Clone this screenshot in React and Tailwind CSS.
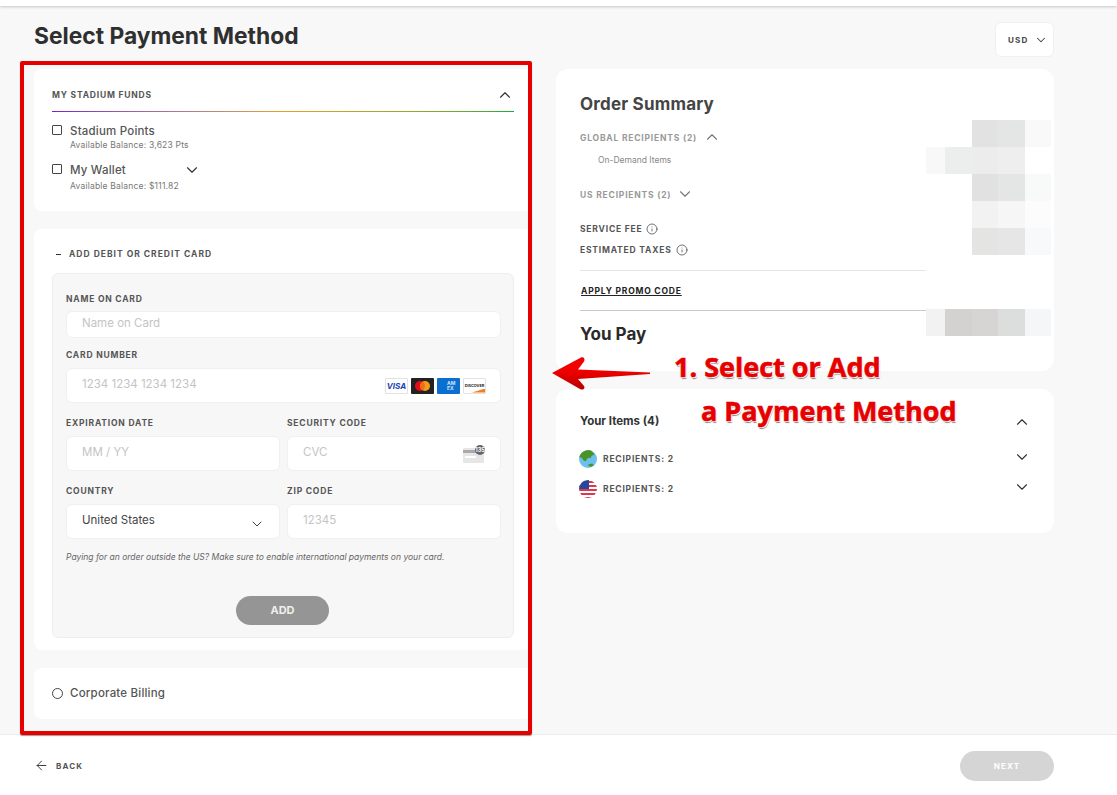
import React from 'react';
import { ChevronDown, ChevronUp, ArrowLeft, Info } from 'lucide-react';

const blurCells = [
  '', '', 'bg-[#e2e2e2]', 'bg-[#e4e5e5]', 'bg-[#f8f9f8]',
  'bg-[#f8f8f8]', 'bg-[#eceeee]', 'bg-[#ececec]', 'bg-[#eeeeee]', '',
  '', '', 'bg-[#e1e1e1]', 'bg-[#e4e6e6]', 'bg-[#f8faf9]',
  '', '', 'bg-[#f2f2f2]', 'bg-[#f6f6f6]', 'bg-[#fcfcfc]',
  '', '', 'bg-[#e4e4e3]', 'bg-[#e7e6e6]', 'bg-[#f8f9fb]',
  '', '', '', '', '',
  '', '', '', '', '',
  'bg-[#f2f2f2]', 'bg-[#d3d2d1]', 'bg-[#d6d5d4]', 'bg-[#dcdddd]', 'bg-[#f5f6f8]',
];

const Label = ({ children, className = '' }) => (
  <div className={`text-[8.5px] leading-[12px] font-bold tracking-[0.8px] uppercase text-[#555] ${className}`}>
    {children}
  </div>
);

const Field = ({ placeholder, h = 'h-[35px]', children, dark }) => (
  <div className={`${h} bg-white rounded-md border border-[#f0f0f0] flex items-center justify-between pl-[15px] pr-[14px]`}>
    <span className={`-mt-px text-[11.5px] ${dark ? 'text-[#444]' : 'text-[#c4c4c4]'}`}>{placeholder}</span>
    {children}
  </div>
);

const CardLogos = () => (
  <div className="flex gap-[3px] items-center">
    <div className="w-[23px] h-[16px] bg-white border border-[#e2e2e2] rounded-[1px] flex items-center justify-center text-[8px] leading-none font-bold italic text-[#1a3fb5]">VISA</div>
    <div className="w-[23px] h-[16px] bg-[#222] rounded-[1px]">
      <svg viewBox="0 0 23 16" className="w-full h-full">
        <circle cx="9" cy="8" r="5" fill="#e30d17" />
        <circle cx="14" cy="8" r="5" fill="#f59b1c" />
        <path d="M11.5 3.7a5 5 0 0 1 0 8.6a5 5 0 0 1 0-8.6z" fill="#f26a1b" />
      </svg>
    </div>
    <div className="w-[23px] h-[16px] bg-[#0a6fce] rounded-[1px] pl-[10px] text-[5px] leading-[5px] font-bold text-[#cfe4f8] pt-[3px]">AM<br />EX</div>
    <div className="w-[23px] h-[16px] bg-white border border-[#e2e2e2] rounded-[1px] relative overflow-hidden text-[3.8px] leading-[13px] font-bold text-center text-[#222]">
      DISCOVER
      <div className="absolute right-0 bottom-0 w-[13px] h-[4px] bg-[#f08020] [clip-path:polygon(100%_0,100%_100%,0_100%)]" />
    </div>
  </div>
);

const CvcIcon = () => (
  <svg width="23" height="18" viewBox="0 0 23 18">
    <rect x="0" y="3" width="21" height="15" rx="1" fill="#e6e6e6" />
    <rect x="0" y="5" width="21" height="3" fill="#a9a9a9" />
    <rect x="2" y="11" width="11" height="2" fill="#fff" />
    <circle cx="17" cy="5" r="5" fill="#666" />
    <text x="17" y="7" fontSize="5.5" textAnchor="middle" fill="#fff" fontWeight="700">135</text>
  </svg>
);

const GlobeIcon = () => (
  <svg width="18" height="18" viewBox="0 0 18 18">
    <circle cx="9" cy="9" r="9" fill="#6cc0ee" />
    <path d="M5 1.2C7 .2 10 -.2 12 .6L14 2.5L15.5 4.5L12.5 6L11.5 8.5L10 7.5L8 9L6.5 11.5L4 10L3 8L.3 7C1 4.5 3 2.2 5 1.2z" fill="#4a9427" />
    <path d="M9 14.5L13 13.5L15 15L12 16.8L9.5 16z" fill="#4a9427" />
  </svg>
);

const FlagIcon = () => (
  <svg width="18" height="18" viewBox="0 0 18 18">
    <defs>
      <clipPath id="flagClip"><circle cx="9" cy="9" r="9" /></clipPath>
    </defs>
    <g clipPath="url(#flagClip)">
      <rect width="18" height="18" fill="#fff" />
      <rect y="1" width="18" height="2" fill="#e0364a" />
      <rect y="5" width="18" height="2" fill="#e0364a" />
      <rect y="9" width="18" height="2" fill="#e0364a" />
      <rect y="13" width="18" height="2" fill="#e0364a" />
      <rect y="17" width="18" height="1" fill="#e0364a" />
      <rect width="10" height="9" fill="#27479c" />
    </g>
  </svg>
);

const Checkbox = () => <div className="w-[10px] h-[10px] mt-px border border-[#444] rounded-[1px] shrink-0" />;

export default function App() {
  return (
    <div className="relative h-[795px] overflow-hidden flex flex-col bg-[#f8f8f8] text-[#444] font-['Inter',sans-serif]">
      {/* top bar */}
      <div className="h-[6px] shrink-0 bg-white shadow-[0_1px_3px_rgba(0,0,0,0.2)]" />

      <div className="flex-1 pl-[34px]">
        <div className="w-[1020px] flex items-start justify-between h-[63px]">
          <h1 className="mt-[15px] text-[22.8px] leading-[30px] font-bold text-[#2f2f2f]">Select Payment Method</h1>
          <div className="mt-[16px] w-[59px] h-[35px] bg-white rounded-md border border-[#f0f0f0] flex items-center pl-[12px] gap-[6px] text-[8px] font-bold tracking-[1.2px] text-[#444]">
            USD
            <ChevronDown size={14} strokeWidth={1.75} />
          </div>
        </div>

        <div className="flex gap-[24px] w-[1020px]">
          {/* left column */}
          <div className="w-[498px] flex flex-col gap-[18px]">
            <div className="h-[142px] bg-white rounded-lg px-[18px] pt-[18px]">
              <div className="flex items-center justify-between h-[16px]">
                <Label className="text-[#333]">My Stadium Funds</Label>
                <ChevronUp size={18} strokeWidth={1.5} className="text-[#333]" />
              </div>
              <div className="mt-[8px] h-px bg-gradient-to-r from-[#7a1fc9] via-[#e8a020] to-[#1fa83a]" />
              <div className="mt-[12px] flex gap-[8px]">
                <Checkbox />
                <div>
                  <div className="text-[11.5px] leading-[14px] font-medium tracking-[0.2px] text-[#555]">Stadium Points</div>
                  <div className="mt-px text-[8.5px] leading-[13px] tracking-[0.2px] text-[#777]">Available Balance: 3,623 Pts</div>
                </div>
              </div>
              <div className="mt-[11px] flex gap-[8px]">
                <Checkbox />
                <div>
                  <div className="flex items-center w-[131px] justify-between h-[14px] text-[11.5px] leading-[14px] font-medium tracking-[0.2px] text-[#555]">
                    My Wallet
                    <ChevronDown size={18} strokeWidth={1.5} className="text-[#333]" />
                  </div>
                  <div className="mt-[3px] text-[8.5px] leading-[13px] tracking-[0.2px] text-[#777]">Available Balance: $111.82</div>
                </div>
              </div>
            </div>

            <div className="h-[421px] bg-white rounded-lg px-[18px] pt-[19px]">
              <div className="flex items-center gap-[8px] h-[12px]">
                <span className="ml-[4px] w-[5px] h-px bg-[#333]" />
                <Label className="text-[#333] tracking-[1px]">Add Debit or Credit Card</Label>
              </div>
              <div className="mt-[13px] h-[365px] bg-[#f7f7f7] border border-[#eeeeee] rounded-md pl-[13px] pr-[12px] pt-[19px]">
                <Label>Name on Card</Label>
                <div className="mt-[6px]">
                  <Field placeholder="Name on Card" h="h-[27px]" />
                </div>
                <Label className="mt-[11px]">Card Number</Label>
                <div className="mt-[7px]">
                  <Field placeholder="1234 1234 1234 1234">
                    <CardLogos />
                  </Field>
                </div>
                <div className="mt-[14px] grid grid-cols-2 gap-x-[7px]">
                  <div>
                    <Label>Expiration Date</Label>
                    <div className="mt-[7px]"><Field placeholder="MM / YY" /></div>
                  </div>
                  <div>
                    <Label>Security Code</Label>
                    <div className="mt-[7px]">
                      <Field placeholder="CVC"><CvcIcon /></Field>
                    </div>
                  </div>
                  <div className="mt-[14px]">
                    <Label>Country</Label>
                    <div className="mt-[7px]">
                      <Field placeholder="United States" dark>
                        <ChevronDown size={16} strokeWidth={1.5} className="text-[#444] mt-[4px]" />
                      </Field>
                    </div>
                  </div>
                  <div className="mt-[14px]">
                    <Label>Zip Code</Label>
                    <div className="mt-[7px]"><Field placeholder="12345" /></div>
                  </div>
                </div>
                <p className="mt-[12px] text-[8.5px] leading-[12px] italic text-[#666]">
                  Paying for an order outside the US? Make sure to enable international payments on your card.
                </p>
                <div className="mt-[33px] flex justify-center">
                  <button className="-ml-[2px] w-[93px] h-[29px] rounded-full bg-[#959595] text-[#eee] text-[11px] font-bold">ADD</button>
                </div>
              </div>
            </div>

            <div className="h-[51px] bg-white rounded-lg px-[18px] flex items-center gap-[7px]">
              <div className="w-[11px] h-[11px] rounded-full border border-[#444]" />
              <span className="text-[11.5px] font-medium tracking-[0.2px] text-[#555]">Corporate Billing</span>
            </div>
          </div>

          {/* right column */}
          <div className="w-[498px] flex flex-col gap-[18px]">
            <div className="relative h-[302px] bg-white rounded-xl px-[24px] pt-[23px]">
              <h2 className="text-[17px] leading-[24px] font-bold tracking-[0.2px] text-[#444]">Order Summary</h2>
              <div className="mt-[16px] flex items-center gap-[6px] h-[12px]">
                <Label className="text-[#999]">Global Recipients (2)</Label>
                <ChevronUp size={18} strokeWidth={1.5} className="text-[#777] -mt-[2px]" />
              </div>
              <div className="mt-[10px] ml-[18px] text-[8.5px] leading-[12px] text-[#888]">On-Demand Items</div>
              <div className="mt-[23px] flex items-center gap-[5px] h-[12px]">
                <Label className="text-[#999]">US Recipients (2)</Label>
                <ChevronDown size={18} strokeWidth={1.5} className="text-[#777] -mt-[2px]" />
              </div>
              <div className="mt-[22px] flex items-center gap-[4px] h-[12px]">
                <Label>Service Fee</Label>
                <Info size={12} strokeWidth={1.5} className="text-[#444]" />
              </div>
              <div className="mt-[9px] flex items-center gap-[4px] h-[12px]">
                <Label>Estimated Taxes</Label>
                <Info size={12} strokeWidth={1.5} className="text-[#444]" />
              </div>
              <div className="mt-[14px] w-[346px] h-px bg-[#e6e6e6]" />
              <div className="mt-[11px] ml-px leading-[12px] h-[12px]">
                <span className="text-[8.5px] leading-[12px] font-bold tracking-[0.8px] text-[#222] underline underline-offset-1">APPLY PROMO CODE</span>
              </div>
              <div className="mt-[16px] w-[346px] h-px bg-[#c8c8c8]" />
              <div className="mt-[11px] text-[17px] leading-[24px] font-bold text-[#2a2a2a]">You Pay</div>

              {/* blurred amounts */}
              <div className="absolute left-[370px] top-[51px] grid grid-cols-[19px_27px_26px_27px_26px] auto-rows-[27px]">
                {blurCells.map((c, i) => <div key={i} className={c} />)}
              </div>
            </div>

            <div className="h-[144px] bg-white rounded-xl pl-[24px] pr-[23px] pt-[25px]">
              <div className="flex items-center justify-between h-[16px]">
                <span className="text-[11.5px] font-bold text-[#333]">Your Items (4)</span>
                <ChevronUp size={18} strokeWidth={1.5} className="text-[#333]" />
              </div>
              <div className="mt-[20px] flex items-center justify-between h-[18px]">
                <div className="-ml-px flex items-center gap-[6px]">
                  <GlobeIcon />
                  <Label>Recipients: 2</Label>
                </div>
                <ChevronDown size={18} strokeWidth={1.5} className="text-[#333] -mt-[4px]" />
              </div>
              <div className="mt-[12px] flex items-center justify-between h-[18px]">
                <div className="-ml-px flex items-center gap-[6px]">
                  <FlagIcon />
                  <Label>Recipients: 2</Label>
                </div>
                <ChevronDown size={18} strokeWidth={1.5} className="text-[#333] -mt-[4px]" />
              </div>
            </div>
          </div>
        </div>
      </div>

      {/* footer */}
      <div className="h-[61px] shrink-0 bg-white border-t border-[#ececec] pt-[2px] flex items-center justify-between pl-[34px] pr-[63px]">
        <div className="flex items-center gap-[7px] text-[8px] font-bold tracking-[1.1px] text-[#555]">
          <ArrowLeft size={15} strokeWidth={1.5} className="text-[#333] -mt-[2px]" />
          BACK
        </div>
        <button className="w-[94px] h-[30px] rounded-full bg-[#d5d5d5] text-white text-[8px] font-bold tracking-[1.2px]">NEXT</button>
      </div>

      {/* annotation overlay */}
      <div className="absolute left-[20px] top-[61px] w-[512px] h-[674px] border-4 border-[#e60000] rounded-[2px] shadow-[0_1px_1px_rgba(0,0,0,0.4)]" />
      <svg className="absolute left-[550px] top-[355px]" width="102" height="36" viewBox="0 0 102 36">
        <defs>
          <linearGradient id="arrowFill" x1="0" y1="0" x2="0" y2="1">
            <stop offset="0.4" stopColor="#f00000" />
            <stop offset="1" stopColor="#b80000" />
          </linearGradient>
        </defs>
        <path d="M2 18L31 2.5C33.5 1.5 35.5 4 34 6.5L28 14.5L100 17.5V19L28 24L34 31C35.5 33.5 33 35.5 30 34z" fill="url(#arrowFill)" />
      </svg>
      <div className="absolute left-[674px] top-[346px] text-[27px] leading-[42px] font-bold text-[#e60000] font-['Open_Sans',sans-serif] [-webkit-text-stroke:0.6px_#e60000] [text-shadow:1px_0_0_#fff,-1px_0_0_#fff,0_1px_0_#fff,0_-1px_0_#fff,1px_1px_0_#fff,-1px_-1px_0_#fff,1px_2px_1px_#888]">
        1. Select or Add
      </div>
      <div className="absolute left-[701px] top-[390px] text-[27px] leading-[42px] font-bold text-[#e60000] font-['Open_Sans',sans-serif] [-webkit-text-stroke:0.6px_#e60000] [text-shadow:1px_0_0_#fff,-1px_0_0_#fff,0_1px_0_#fff,0_-1px_0_#fff,1px_1px_0_#fff,-1px_-1px_0_#fff,1px_2px_1px_#888]">
        a Payment Method
      </div>
    </div>
  );
}
